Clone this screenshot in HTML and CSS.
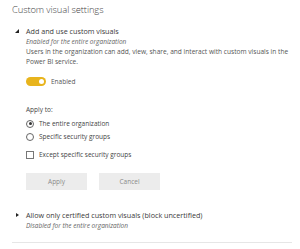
FILE: index.html
```html
<!DOCTYPE html>
<html lang="en">
<head>
    <meta charset="UTF-8">
    <title>Custom visual settings</title>
    <link rel="stylesheet" href="styles.css">
</head>
<body>
    <div class="panel">
        <h1 class="title">Custom visual settings</h1>

        <div class="setting">
            <div class="setting-head">
                <span class="caret caret-open"></span>
                <span class="setting-name">Add and use custom visuals</span>
            </div>
            <div class="setting-body">
                <p class="status">Enabled for the entire organization</p>
                <p class="desc">Users in the organization can add, view, share, and interact with custom visuals in the Power BI service.</p>
                <div class="toggle-row">
                    <span class="toggle"><span class="knob"></span></span>
                    <span class="toggle-label">Enabled</span>
                </div>
                <p class="apply-to">Apply to:</p>
                <label class="option"><span class="radio checked"></span>The entire organization</label>
                <label class="option"><span class="radio"></span>Specific security groups</label>
                <label class="option check-option"><span class="checkbox"></span>Except specific security groups</label>
                <div class="buttons">
                    <button class="btn">Apply</button>
                    <button class="btn">Cancel</button>
                </div>
            </div>
        </div>

        <div class="setting collapsed">
            <div class="setting-head">
                <span class="caret caret-closed"></span>
                <span class="setting-name">Allow only certified custom visuals (block uncertified)</span>
            </div>
            <div class="setting-body">
                <p class="status">Disabled for the entire organization</p>
            </div>
        </div>
    </div>
</body>
</html>
```

FILE: styles.css
```css
body { margin: 0; background: #fff; font-family: "Open Sans", "Noto Sans", sans-serif; color: #333; }
.panel { padding: 2px 8px 0 12px; }
.title { font-size: 9.4px; font-weight: 300; color: #444; margin: 0 0 7px; line-height: 16px; letter-spacing: -0.1px; }
.setting-head { display: flex; align-items: center; height: 12px; }
.setting-name { font-size: 7.2px; color: #3a3a3a; }
.caret { display: inline-block; width: 14px; flex: none; position: relative; height: 12px; }
.caret-open::before { content: ""; position: absolute; left: 3px; top: 4px; border-style: solid; border-width: 0 0 4px 4px; border-color: transparent transparent #222 transparent; }
.caret-closed::before { content: ""; position: absolute; left: 4px; top: 3.5px; border-style: solid; border-width: 2.5px 0 2.5px 3px; border-color: transparent transparent transparent #222; }
.setting-body { padding-left: 14px; }
.status { margin: 0; font-size: 6.5px; font-style: italic; color: #666; line-height: 10px; }
.desc { margin: 0; font-size: 6.6px; color: #555; line-height: 10px; padding-right: 2px; }
.toggle-row { display: flex; align-items: center; margin-top: 9px; height: 10px; }
.toggle { width: 20px; height: 9px; border-radius: 5px; background: #e8b41d; position: relative; flex: none; }
.knob { position: absolute; right: 2px; top: 2px; width: 5px; height: 5px; border-radius: 50%; background: #fff; }
.toggle-label { font-size: 6.5px; color: #555; margin-left: 5px; }
.apply-to { margin: 19px 0 2px; font-size: 6.5px; color: #444; line-height: 10px; }
.option { display: flex; align-items: center; font-size: 6.5px; color: #444; height: 13px; }
.check-option { margin-top: 5px; }
.radio { width: 6px; height: 6px; border: 1px solid #666; border-radius: 50%; margin-right: 5px; position: relative; flex: none; }
.radio.checked::after { content: ""; position: absolute; left: 1.5px; top: 1.5px; width: 3px; height: 3px; border-radius: 50%; background: #333; }
.checkbox { width: 6px; height: 6px; border: 1px solid #777; margin-right: 5px; flex: none; }
.buttons { display: flex; gap: 12px; margin-top: 12px; }
.btn { width: 61px; height: 17px; border: none; background: #ececec; color: #8a8a8a; font-family: inherit; font-size: 6.5px; padding: 0; }
.collapsed { margin-top: 19px; padding-bottom: 11px; border-bottom: 1px solid #e6e6e6; }
```
